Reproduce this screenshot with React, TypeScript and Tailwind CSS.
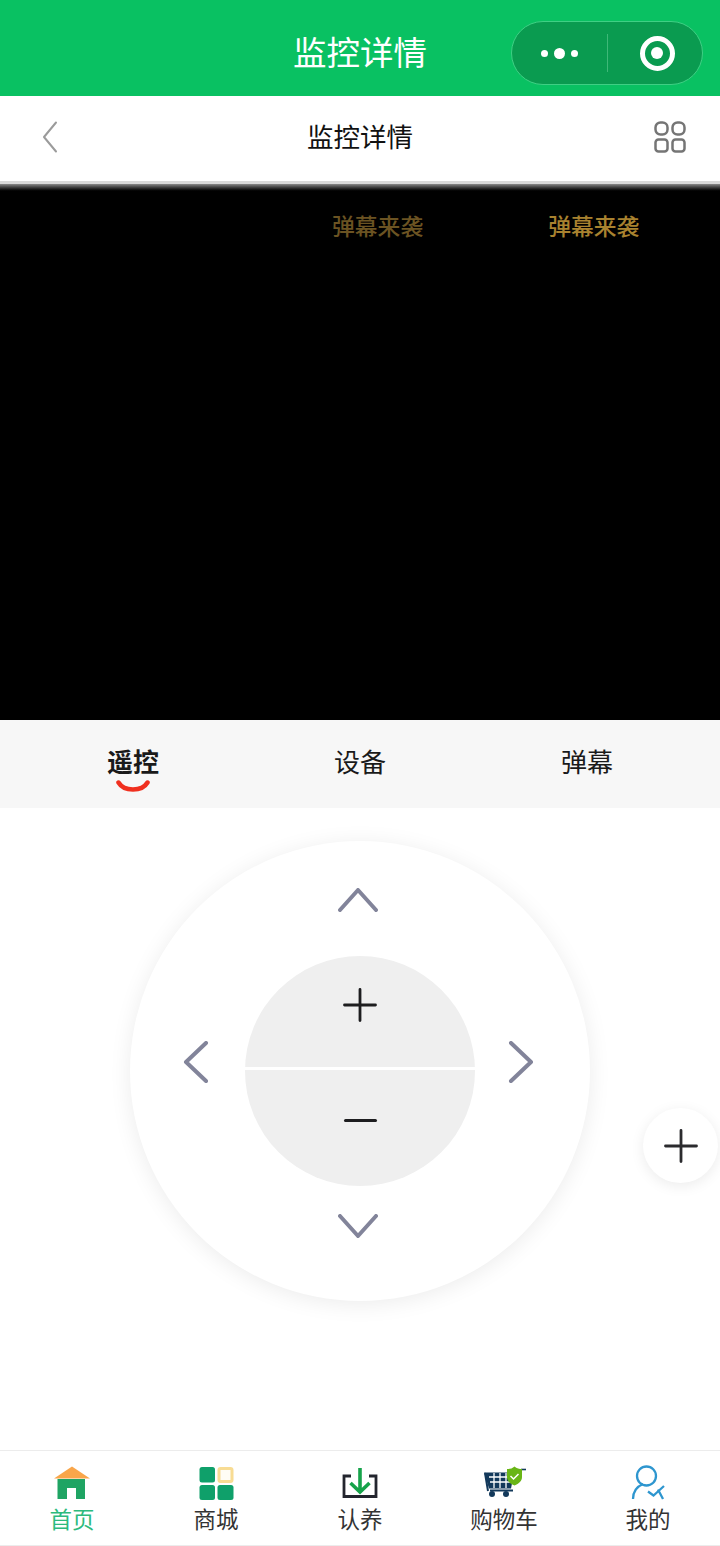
const tabs = ["遥控", "设备", "弹幕"];

function Chevron({ d, className }: { d: string; className: string }) {
  return (
    <svg className={`block ${className}`} fill="none" stroke="#82849a" strokeWidth="4" strokeLinecap="round" strokeLinejoin="round">
      <path d={d} />
    </svg>
  );
}

function Plus({ color = "#1d1d1f" }: { color?: string }) {
  return (
    <svg width="34" height="34" viewBox="0 0 34 34" fill="none" stroke={color} strokeWidth="2.800" strokeLinecap="round">
      <path d="M1.500 17h31M17 1.500v31" />
    </svg>
  );
}

function HomeIcon() {
  return (
    <svg width="60" height="44" viewBox="2 0 60 44">
      <path d="M14 18.500 32 6.500l18 12z" fill="#f9a64a" />
      <path d="M17.500 19h27.500v20h-9V28h-9v11h-9.500z" fill="#1fa463" />
    </svg>
  );
}

function ShopIcon() {
  return (
    <svg width="60" height="44" viewBox="-4 0 60 44">
      <rect x="9.500" y="7" width="15.500" height="15.500" rx="2.500" fill="#0fa06a" />
      <rect x="29" y="8.500" width="13" height="13" rx="1.500" fill="#fffdf5" stroke="#f8dc93" strokeWidth="3" />
      <rect x="9.500" y="25" width="15.500" height="15" rx="2.500" fill="#0fa06a" />
      <rect x="27.500" y="25" width="16" height="15" rx="2.500" fill="#0fa06a" />
    </svg>
  );
}

function AdoptIcon() {
  return (
    <svg width="60" height="44" viewBox="0 0 60 44" fill="none">
      <path d="M21 16h-7v20.500h32V16h-7" stroke="#23252e" strokeWidth="2.800" />
      <path d="M30 8v23M20.500 23l9.500 9 9.500-9" stroke="#16a34a" strokeWidth="3.600" />
    </svg>
  );
}

function CartIcon() {
  return (
    <svg width="60" height="44" viewBox="-1 0 60 44">
      <path d="M9 12.500h30l-3 16H14z" fill="#13395b" />
      <path d="M14 17h22M15 22h20M19 13v15M25 13v15M31 13v15" stroke="#fff" strokeWidth="1.300" />
      <path d="M15 30.500h23M13 31 10 13" stroke="#13395b" strokeWidth="2" fill="none" />
      <circle cx="17" cy="34" r="3" fill="#13395b" />
      <circle cx="31" cy="34" r="3" fill="#13395b" />
      <path d="M46 9.500h5" stroke="#13395b" strokeWidth="1.600" />
      <path d="M39.500 6.500c2 2 5 2.600 7.500 2.600V17c0 4-3 6.500-7.500 8.500C35 23.500 32 21 32 17V9.100c2.500 0 5.500-.6 7.500-2.600z" fill="#69b516" />
      <path d="m35.500 16 3 3 5-5" fill="none" stroke="#fff" strokeWidth="1.500" />
    </svg>
  );
}

function MineIcon() {
  return (
    <svg width="60" height="44" viewBox="-2 0 60 44" fill="none" stroke="#2e96cf" strokeWidth="2.300">
      <circle cx="26.500" cy="16" r="9.500" />
      <path d="M13 39c0-7 4-12.500 10-15M28 31.500l5.500 4L44 26M38 29.500l5 9.500" />
    </svg>
  );
}

const navItems = [
  { label: "首页", icon: <HomeIcon />, active: true },
  { label: "商城", icon: <ShopIcon />, active: false },
  { label: "认养", icon: <AdoptIcon />, active: false },
  { label: "购物车", icon: <CartIcon />, active: false },
  { label: "我的", icon: <MineIcon />, active: false },
];

export default function App() {
  return (
    <div className="relative flex h-[1546px] w-[720px] flex-col overflow-hidden bg-white font-['Noto_Sans_CJK_SC','Liberation_Sans',sans-serif]">
      <header className="relative flex h-[96px] shrink-0 items-center justify-center bg-[#09c162] pt-[6px]">
        <h1 className="text-[33.500px] leading-none font-normal text-white">监控详情</h1>
        <div className="absolute top-[21px] right-[17px] flex h-[64px] w-[192px] items-center rounded-full border border-[#3fcf84] bg-[#0a9b50]">
          <div className="flex w-[95px] items-center justify-center gap-[6px]">
            <span className="size-[7px] rounded-full bg-white" />
            <span className="size-[11px] rounded-full bg-white" />
            <span className="size-[7px] rounded-full bg-white" />
          </div>
          <div className="h-[38px] w-px bg-[#3fb878]" />
          <div className="flex flex-1 items-center justify-center pl-[4px]">
            <span className="flex size-[35px] items-center justify-center rounded-full border-[5px] border-white">
              <span className="size-[12px] rounded-full bg-white" />
            </span>
          </div>
        </div>
      </header>

      <nav className="grid h-[85px] shrink-0 grid-cols-[1fr_auto_1fr] items-center bg-white pr-[34px] pb-[4px] pl-[41px]">
        <svg width="18" height="32" viewBox="0 0 18 32" fill="none" stroke="#9b9b9b" strokeWidth="2" strokeLinecap="round" strokeLinejoin="round">
          <path d="M15 1.500 3 16l12 14.500" />
        </svg>
        <h2 className="pr-[7px] text-[26.500px] leading-none font-normal text-[#111]">监控详情</h2>
        <svg className="justify-self-end" width="32" height="32" viewBox="0 0 32 32" fill="none" stroke="#757575" strokeWidth="2.500">
          <rect x="1.500" y="1.500" width="12" height="12" rx="5" />
          <rect x="18.500" y="1.500" width="12" height="12" rx="5" />
          <rect x="1.500" y="18.500" width="12" height="12" rx="3" />
          <rect x="18.500" y="18.500" width="12" height="12" rx="3" />
        </svg>
      </nav>

      <div className="h-[3px] shrink-0 bg-[#d9d9d9]" />
      <section className="flex h-[536px] shrink-0 flex-col bg-black">
        <div className="h-[8px] bg-linear-to-b from-[#8a8a8a] to-black" />
        <div className="flex gap-[125px] pt-[18px] pl-[332px] text-[22.800px] leading-[32px] font-medium">
          <span className="text-[#6b5322]">弹幕来袭</span>
          <span className="text-[#a8822f]">弹幕来袭</span>
        </div>
      </section>

      <div className="grid h-[88px] shrink-0 grid-cols-[227px_227px_227px] bg-[#f7f7f7] px-[19.500px]">
        {tabs.map((tab, index) => (
          <div key={tab} className="relative flex items-center justify-center pb-[6px]">
            <span className={`text-[26px] leading-none text-[#1a1a1a] ${index === 0 ? "font-bold" : "font-normal"}`}>{tab}</span>
            {index === 0 ? (
              <svg className="absolute top-[60px] left-[96px]" width="34" height="12" viewBox="0 0 34 12" fill="none">
                <path d="M2.500 2.500c3 5 8 7 14.500 7s11.500-2 14.500-7" stroke="#f0301f" strokeWidth="4.500" strokeLinecap="round" />
              </svg>
            ) : null}
          </div>
        ))}
      </div>

      <main className="relative flex-1">
        <div className="mx-auto mt-[33px] grid size-[460px] grid-cols-[115px_230px_115px] grid-rows-[115px_230px_115px] rounded-full bg-white shadow-[0_3px_22px_rgba(0,0,0,0.08)]">
          <div className="col-start-2 pt-[47px] pl-[93px]">
            <Chevron className="h-[24px] w-[40px]" d="M2 22 20 2l18 20" />
          </div>
          <div className="col-start-1 row-start-2 pt-[85px] pl-[53px]">
            <Chevron className="h-[42px] w-[26px]" d="M23 2 3 21l20 19" />
          </div>
          <div className="col-start-2 row-start-2 flex flex-col overflow-hidden rounded-full">
            <div className="flex h-[111px] items-start justify-center bg-[#efefef] pt-[32px]">
              <Plus />
            </div>
            <div className="h-[3px] bg-white" />
            <div className="flex flex-1 items-start justify-center bg-[#efefef] pt-[49px]">
              <div className="h-[3px] w-[33px] rounded-full bg-[#1d1d1f]" />
            </div>
          </div>
          <div className="col-start-3 row-start-2 pt-[85px] pl-[33px]">
            <Chevron className="h-[42px] w-[26px]" d="M3 2l20 19L3 40" />
          </div>
          <div className="col-start-2 row-start-3 pt-[28px] pl-[93px]">
            <Chevron className="h-[24px] w-[40px]" d="M2 2l18 20L38 2" />
          </div>
        </div>
        <button className="absolute top-[300px] right-[2px] flex size-[75px] items-center justify-center rounded-full bg-white shadow-[0_3px_14px_rgba(0,0,0,0.08)]">
          <Plus color="#2b2b2e" />
        </button>
      </main>

      <footer className="mb-px grid h-[94px] shrink-0 grid-cols-5 border-t border-[#ececec] pt-[9px]">
        {navItems.map((item) => (
          <div key={item.label} className="flex flex-col items-center">
            {item.icon}
            <span className={`text-[22.500px] leading-[28px] ${item.active ? "text-[#2dba7d]" : "text-[#333]"}`}>{item.label}</span>
          </div>
        ))}
      </footer>
      <div className="h-px bg-[#ececec]" />
    </div>
  );
}
